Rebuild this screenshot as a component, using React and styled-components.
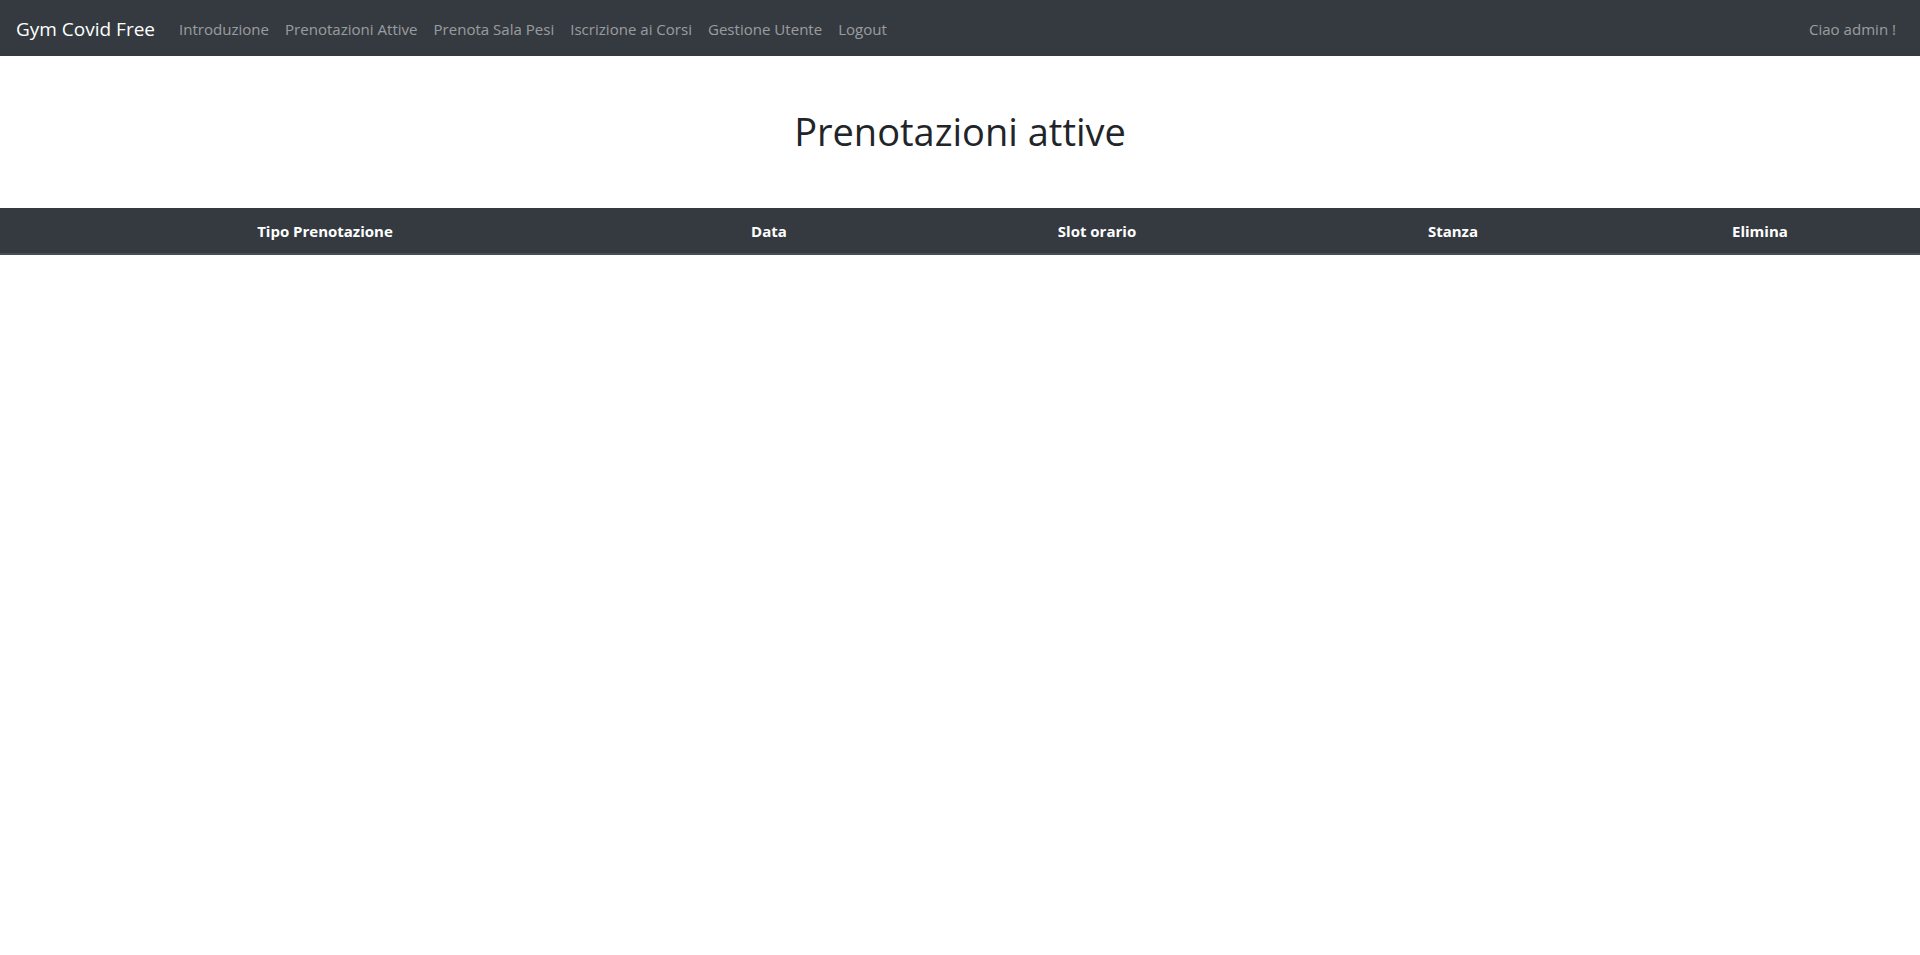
import React from "react";
import styled, { createGlobalStyle } from "styled-components";

const Global = createGlobalStyle`
  html, body { margin: 0; padding: 0; background: #fff; }
  body {
    font-family: "Open Sans", "Noto Sans", "Liberation Sans", sans-serif;
    font-size: 16px;
    line-height: 1.5;
    color: #212529;
  }
  * { box-sizing: border-box; }
`;

const Navbar = styled.nav`
  display: flex;
  align-items: center;
  height: 56px;
  padding: 9px 16px 7px;
  background: #343a40;
`;

const Brand = styled.a`
  font-size: 19px;
  line-height: 30px;
  padding: 5px 0;
  margin-right: 16px;
  color: #fff;
  text-decoration: none;
  white-space: nowrap;
`;

const NavList = styled.ul`
  display: flex;
  list-style: none;
  margin: 0;
  padding: 0;
  flex: 1;
`;

const NavLink = styled.a`
  display: block;
  padding: 8px;
  font-size: 15.05px;
  color: rgba(255, 255, 255, 0.5);
  text-decoration: none;
  white-space: nowrap;
`;

const Title = styled.h1`
  margin: 51px 0 53px;
  text-align: center;
  font-size: 38px;
  font-weight: 400;
  line-height: 48px;
  color: #212529;
`;

const Table = styled.table`
  width: 100%;
  border-collapse: collapse;
`;

const Th = styled.th`
  width: ${(p) => p.$w};
  padding: 11px 12px 10px;
  text-align: center;
  font-size: 15px;
  font-weight: 700;
  color: #fff;
  background: #343a40;
  border-top: 1px solid #343a40;
  border-bottom: 2px solid #454d55;
`;

const cols = [
  ["Tipo Prenotazione", "33.85%"],
  ["Data", "12.4%"],
  ["Slot orario", "21.77%"],
  ["Stanza", "15.31%"],
  ["Elimina", "16.67%"],
];

export default function App() {
  return (
    <>
      <Global />
      <Navbar>
        <Brand href="#">Gym Covid Free</Brand>
        <NavList>
          {["Introduzione", "Prenotazioni Attive", "Prenota Sala Pesi", "Iscrizione ai Corsi", "Gestione Utente", "Logout"].map((t) => (
            <li key={t}>
              <NavLink href="#">{t}</NavLink>
            </li>
          ))}
        </NavList>
        <NavLink as="span">Ciao admin !</NavLink>
      </Navbar>
      <Title>Prenotazioni attive</Title>
      <Table>
        <thead>
          <tr>
            {cols.map(([t, w]) => (
              <Th key={t} $w={w}>{t}</Th>
            ))}
          </tr>
        </thead>
        <tbody />
      </Table>
    </>
  );
}
